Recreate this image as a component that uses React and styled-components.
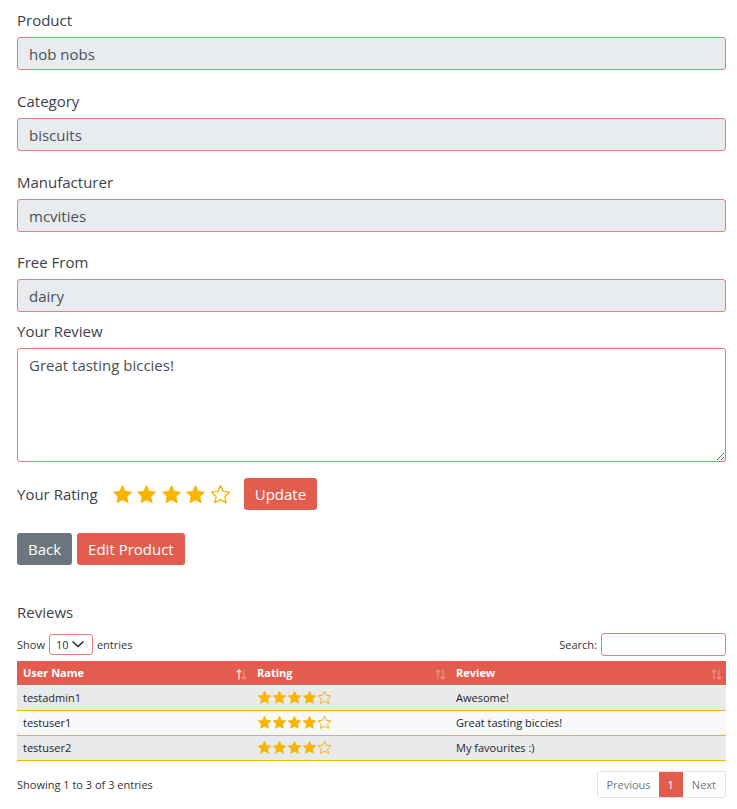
import styled, { createGlobalStyle } from 'styled-components'

const RED = '#e35d4f'
const SOFT_RED = '#ea7d71'
const GOLD = '#f7b500'

const GlobalStyle = createGlobalStyle`
    body {
        margin: 0;
        background: #fff;
        font-family: "Open Sans", "Noto Sans", sans-serif;
        color: #343a40;
    }
    * { box-sizing: border-box; }
`

//Styling
const Page = styled.div`
    padding: 9px 11px 12px 17px;
`
const Group = styled.div`
    margin-bottom: ${props => props.$gap}px;
`
const Label = styled.label`
    display: block;
    font-size: 15px;
    line-height: 22px;
    margin-bottom: 6px;
    color: #3d4248;
`
const Field = styled.input`
    display: block;
    width: 100%;
    height: 33px;
    padding: 0 11px;
    font: inherit;
    font-size: 15px;
    color: #495057;
    background: #e9ecef;
    border: 1px solid ${SOFT_RED};
    border-radius: 3px;
    outline: none;
`
const Review = styled.textarea`
    display: block;
    width: 100%;
    height: 114px;
    padding: 5px 11px;
    font: inherit;
    font-size: 15px;
    line-height: 22px;
    color: #495057;
    background: #fff;
    border: 1px solid ${SOFT_RED};
    border-radius: 3px;
    outline: none;
`
const RatingRow = styled.div`
    display: flex;
    align-items: center;
    margin-top: 16px;
    height: 32px;
`
const RatingLabel = styled.span`
    font-size: 15px;
    color: #3d4248;
    margin-right: 14px;
`
const Stars = styled.div`
    display: flex;
    gap: ${props => props.$gap}px;
    margin-right: ${props => props.$after}px;
`
const Button = styled.button`
    height: 32px;
    padding: 0 11px;
    border: none;
    border-radius: 3px;
    font-family: "Open Sans", sans-serif;
    font-size: 15px;
    color: #fff;
    background: ${props => props.$grey ? '#6c757d' : RED};
    cursor: pointer;
`
const ButtonRow = styled.div`
    display: flex;
    gap: 5px;
    margin-top: 23px;
`
const SectionTitle = styled.div`
    margin-top: 36px;
    font-size: 15px;
    line-height: 22px;
    color: #3d4248;
`
const Controls = styled.div`
    display: flex;
    justify-content: space-between;
    align-items: center;
    margin-top: 9px;
    height: 24px;
    font-size: 11px;
    color: #333;
`
const Inline = styled.div`
    display: flex;
    align-items: center;
    gap: 4px;
`
const FakeSelect = styled.div`
    display: flex;
    align-items: center;
    gap: 2px;
    width: 44px;
    height: 21px;
    padding-left: 6px;
    border: 1px solid ${SOFT_RED};
    border-radius: 3px;
    font-size: 11px;
`
const SearchBox = styled.input`
    width: 125px;
    height: 23px;
    border: 1px solid ${SOFT_RED};
    border-radius: 3px;
    outline: none;
`
const Table = styled.table`
    width: 100%;
    margin-top: 5px;
    border-collapse: collapse;
    font-size: 11px;
    color: #212529;
`
const Th = styled.th`
    position: relative;
    background: ${RED};
    color: #fff;
    font-weight: 700;
    text-align: left;
    height: 24px;
    padding: 0 6px;
    border-bottom: 1px solid #fff;
    width: ${props => props.$w};
`
const SortIcon = styled.svg`
    position: absolute;
    right: 4px;
    top: 8px;
`
const Tr = styled.tr`
    background: ${props => props.$odd ? '#e9eaec' : '#f8f9fa'};
    border-bottom: 1px solid ${GOLD};
`
const Td = styled.td`
    height: 25px;
    padding: 0 6px;
`
const Footer = styled.div`
    display: flex;
    justify-content: space-between;
    align-items: center;
    margin-top: 10px;
    font-size: 11px;
    color: #333;
`
const Pager = styled.div`
    display: flex;
    border: 1px solid #dee2e6;
    border-radius: 3px;
    overflow: hidden;
`
const PageLink = styled.span`
    height: 25px;
    line-height: 25px;
    padding: 0 ${props => props.$pad}px;
    font-size: 11px;
    color: ${props => props.$active ? '#fff' : '#6c757d'};
    background: ${props => props.$active ? RED : '#fff'};
`

const StarIcon = ({ filled, size }) => (
    <svg width={size} height={size} viewBox="0 0 24 24">
        <path
            d="M12 1.8l3.1 6.6 7.2.9-5.3 5 1.4 7.1L12 17.9l-6.4 3.5 1.4-7.1-5.3-5 7.2-.9z"
            fill={filled ? GOLD : 'none'}
            stroke={GOLD}
            strokeWidth={filled ? 1 : 1.6}
            strokeLinejoin="round"
        />
    </svg>
)

const StarRating = ({ value, size, gap, after = 0 }) => (
    <Stars $gap={gap} $after={after}>
        {[1, 2, 3, 4, 5].map(n => <StarIcon key={n} size={size} filled={n <= value} />)}
    </Stars>
)

// little up/down arrows drawn like the DataTables sort marker
const Sort = ({ active }) => (
    <SortIcon width="11" height="11" viewBox="0 0 11 11">
        <g fill="none" strokeWidth="1.3">
            <path d="M3 10.5V1M0.8 3.3L3 1l2.2 2.3" stroke={active ? '#fbe3ef' : 'rgba(255,255,255,0.3)'} />
            <path d="M8 0.5V10M5.8 7.7L8 10l2.2-2.3" stroke="rgba(255,255,255,0.3)" />
        </g>
    </SortIcon>
)

const fields = [
    { label: 'Product', value: 'hob nobs', gap: 20 },
    { label: 'Category', value: 'biscuits', gap: 20 },
    { label: 'Manufacturer', value: 'mcvities', gap: 19 },
    { label: 'Free From', value: 'dairy', gap: 8 },
]

const reviews = [
    { user: 'testadmin1', rating: 4, text: 'Awesome!' },
    { user: 'testuser1', rating: 4, text: 'Great tasting biccies!' },
    { user: 'testuser2', rating: 4, text: 'My favourites :)' },
]

const App = () => {
    return (
        <>
            <GlobalStyle />
            <Page>
                {fields.map(f => (
                    <Group key={f.label} $gap={f.gap}>
                        <Label>{f.label}</Label>
                        <Field value={f.value} readOnly />
                    </Group>
                ))}
                <Group $gap={0}>
                    <Label>Your Review</Label>
                    <Review defaultValue="Great tasting biccies!" />
                </Group>

                <RatingRow>
                    <RatingLabel>Your Rating</RatingLabel>
                    <StarRating value={4} size={21} gap={3.5} after={13} />
                    <Button>Update</Button>
                </RatingRow>

                <ButtonRow>
                    <Button $grey>Back</Button>
                    <Button>Edit Product</Button>
                </ButtonRow>

                <SectionTitle>Reviews</SectionTitle>
                <Controls>
                    <Inline>
                        Show
                        <FakeSelect>
                            10
                            <svg width="14" height="10" viewBox="0 0 14 10">
                                <path d="M1.5 2.5l5.5 5 5.5-5" fill="none" stroke="#222" strokeWidth="1.5" />
                            </svg>
                        </FakeSelect>
                        entries
                    </Inline>
                    <Inline>
                        Search:
                        <SearchBox />
                    </Inline>
                </Controls>

                <Table>
                    <thead>
                        <tr>
                            <Th $w="234px">User Name<Sort active /></Th>
                            <Th $w="199px">Rating<Sort /></Th>
                            <Th>Review<Sort /></Th>
                        </tr>
                    </thead>
                    <tbody>
                        {reviews.map((r, i) => (
                            <Tr key={r.user} $odd={i % 2 === 0}>
                                <Td>{r.user}</Td>
                                <Td><StarRating value={r.rating} size={15} gap={0} /></Td>
                                <Td>{r.text}</Td>
                            </Tr>
                        ))}
                    </tbody>
                </Table>

                <Footer>
                    <span>Showing 1 to 3 of 3 entries</span>
                    <Pager>
                        <PageLink $pad={8}>Previous</PageLink>
                        <PageLink $pad={9} $active>1</PageLink>
                        <PageLink $pad={9}>Next</PageLink>
                    </Pager>
                </Footer>
            </Page>
        </>
    );
}

export default App;
